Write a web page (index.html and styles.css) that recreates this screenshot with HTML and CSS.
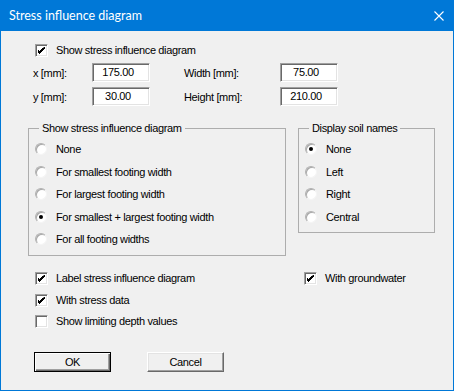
FILE: index.html
```html
<!DOCTYPE html>
<html lang="en">
<head>
    <meta name="viewport" content="width=device-width, initial-scale=1">
    <title>Stress influence diagram</title>
    <link rel="stylesheet" href="styles.css">
</head>
<body>
    <div class="window">
        <div class="titlebar">
            <span class="title">Stress influence diagram</span>
            <svg class="close" width="10" height="10" viewBox="0 0 10 10">
                <path d="M0.5 0.5 L9.5 9.5 M9.5 0.5 L0.5 9.5" stroke="#fff" stroke-width="1.1" fill="none"/>
            </svg>
        </div>

        <div class="content">
            <label class="check main-check">
                <span class="box checked"></span>
                <span>Show stress influence diagram</span>
            </label>

            <div class="fields">
                <span>x [mm]:</span>
                <span class="field">175.00</span>
                <span>Width [mm]:</span>
                <span class="field">75.00</span>
                <span>y [mm]:</span>
                <span class="field">30.00</span>
                <span>Height [mm]:</span>
                <span class="field">210.00</span>
            </div>

            <div class="groups">
                <fieldset class="group group-wide">
                    <legend>Show stress influence diagram</legend>
                    <label class="radio"><span class="dot"></span><span>None</span></label>
                    <label class="radio"><span class="dot"></span><span>For smallest footing width</span></label>
                    <label class="radio"><span class="dot"></span><span>For largest footing width</span></label>
                    <label class="radio"><span class="dot on"></span><span>For smallest + largest footing width</span></label>
                    <label class="radio"><span class="dot"></span><span>For all footing widths</span></label>
                </fieldset>
                <fieldset class="group group-narrow">
                    <legend>Display soil names</legend>
                    <label class="radio"><span class="dot on"></span><span>None</span></label>
                    <label class="radio"><span class="dot"></span><span>Left</span></label>
                    <label class="radio"><span class="dot"></span><span>Right</span></label>
                    <label class="radio"><span class="dot"></span><span>Central</span></label>
                </fieldset>
            </div>

            <div class="options">
                <div class="opt-col">
                    <label class="check row"><span class="box checked"></span><span>Label stress influence diagram</span></label>
                    <label class="check row"><span class="box checked"></span><span>With stress data</span></label>
                    <label class="check row"><span class="box"></span><span>Show limiting depth values</span></label>
                </div>
                <div class="opt-col">
                    <label class="check row"><span class="box checked"></span><span>With groundwater</span></label>
                </div>
            </div>

            <div class="buttons">
                <button class="btn default">OK</button>
                <button class="btn">Cancel</button>
            </div>
        </div>
    </div>
</body>
</html>
```

FILE: styles.css
```css
body {
    margin: 0;
    background: #f0f0f0;
    font-family: "Liberation Sans", Arial, sans-serif;
    font-size: 11px;
    letter-spacing: -0.35px;
    color: #000;
}

.window {
    width: 454px;
    height: 391px;
    box-sizing: border-box;
    border: 1px solid #0078d7;
    border-top: none;
    background: #f0f0f0;
}

.titlebar {
    height: 31px;
    margin: 0 -1px;
    background: #0078d7;
    color: #fff;
    display: flex;
    align-items: center;
    justify-content: space-between;
    padding: 0 10px 0 9px;
    font-family: Lato, sans-serif;
    font-size: 12.5px;
    letter-spacing: 0;
}

.close {
    display: block;
}

/* checkbox + radio */
.check {
    display: flex;
    align-items: center;
    gap: 8px;
    line-height: 13px;
}

.box {
    width: 13px;
    height: 13px;
    box-sizing: border-box;
    border: 1px solid;
    border-color: #a0a0a0 #fff #fff #a0a0a0;
    box-shadow: inset 1px 1px #696969, inset -1px -1px #e3e3e3;
    background: #fff;
    flex: none;
}

.box.checked {
    background: #fff url("data:image/svg+xml,%3Csvg xmlns='http://www.w3.org/2000/svg' width='7' height='7'%3E%3Cpath d='M6 0h1v2h-1v1h-1v1h-1v1h-1v1h-1v1h-1v-1h-1v-1h-1v-3h1v1h1v1h1v-1h1v-1h1v-1h1z' fill='%23000'/%3E%3C/svg%3E") no-repeat 2px 2px;
}

.main-check {
    margin: 13px 0 0 34px;
}

.fields {
    display: grid;
    grid-template-columns: 59px 92px 96px 58px;
    grid-auto-rows: 19px;
    row-gap: 5px;
    align-items: center;
    margin: 6px 0 0 32px;
}

.field {
    width: 58px;
    height: 19px;
    box-sizing: border-box;
    border: 1px solid;
    border-color: #a0a0a0 #fff #fff #a0a0a0;
    box-shadow: inset 1px 1px #696969, inset -1px -1px #e3e3e3;
    background: #fff;
    text-align: center;
    padding-right: 6px;
    line-height: 17px;
}

.groups {
    display: flex;
    align-items: flex-start;
    gap: 12px;
    margin: 15px 0 0 27px;
}

.group {
    margin: 0;
    padding: 3px 0 0 6px;
    border: 1px solid #adadad;
    box-sizing: border-box;
}

.group legend {
    padding: 0 3px;
    margin-left: 4px;
    line-height: 14px;
}

.group-wide {
    width: 258px;
    height: 135px;
}

.group-narrow {
    width: 137px;
    height: 112px;
}

.radio {
    display: flex;
    align-items: center;
    gap: 9px;
    height: 22.5px;
}

.dot {
    width: 12px;
    height: 12px;
    box-sizing: border-box;
    border-radius: 50%;
    border: 1px solid;
    border-color: #b0b0b0 #f4f4f4 #f4f4f4 #b0b0b0;
    box-shadow: inset 1px 1px #a8a8a8;
    background: #fff;
    position: relative;
    flex: none;
}

.dot.on::after {
    content: "";
    position: absolute;
    left: 3px;
    top: 3px;
    width: 4px;
    height: 4px;
    border-radius: 50%;
    background: #000;
}

.options {
    display: flex;
    margin: 12px 0 0 34px;
}

.opt-col:first-child {
    width: 269px;
}

.row {
    height: 21.5px;
}

.buttons {
    display: flex;
    gap: 36px;
    margin: 19px 0 0 33px;
}

.btn {
    width: 77px;
    height: 20px;
    padding: 0;
    background: #f0f0f0;
    font-family: "Liberation Sans", Arial, sans-serif;
    font-size: 11px;
    letter-spacing: -0.35px;
    color: #000;
    border: 1px solid;
    border-color: #fff #696969 #696969 #fff;
    box-shadow: inset -1px -1px #a0a0a0, inset 1px 1px #e3e3e3;
}

.btn.default {
    border: 1px solid #000;
    box-shadow: inset 1px 1px #fff, inset -1px -1px #696969, inset -2px -2px #a0a0a0;
}
```
